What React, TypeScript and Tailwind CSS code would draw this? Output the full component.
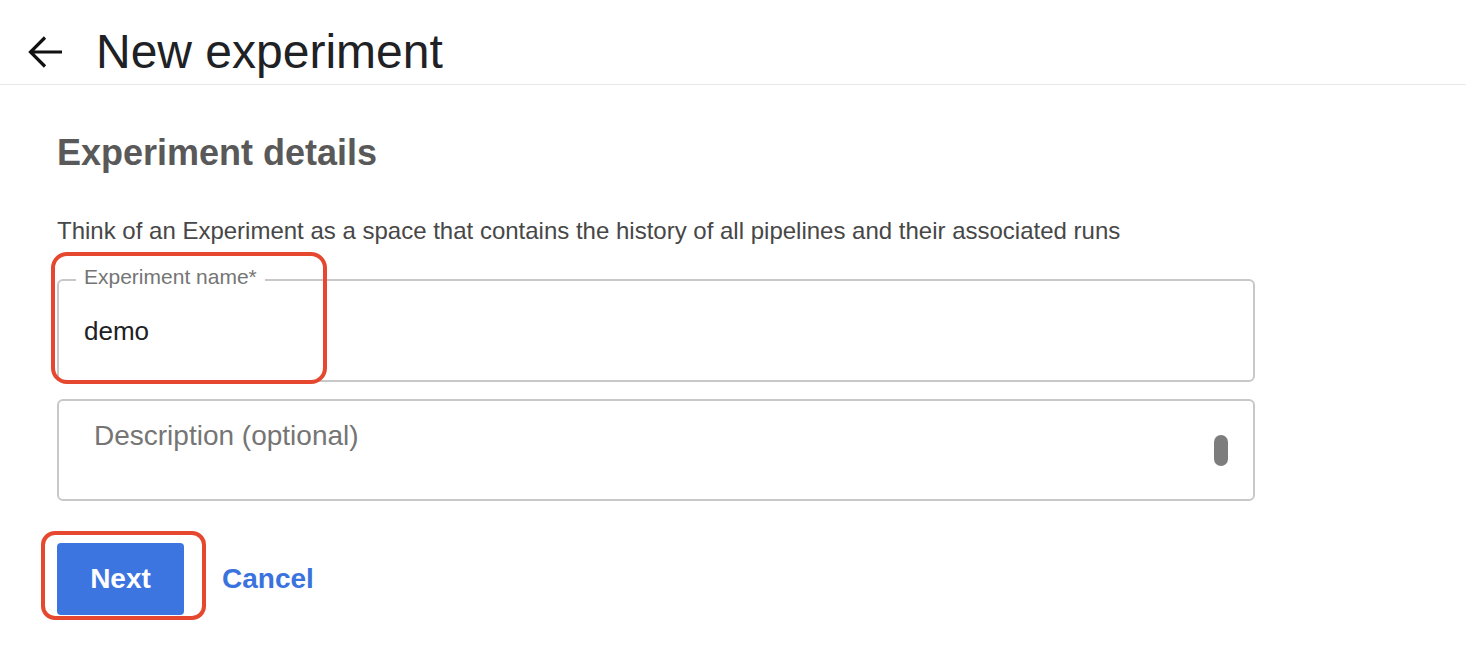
import React from "react";

function BackArrow() {
    return (
        <svg width="36" height="36" viewBox="0 0 36 36" fill="none">
            <path d="M34 18H3.5M17 3.5L2.5 18L17 32.5" stroke="#111111" strokeWidth="3.2" strokeLinecap="butt" strokeLinejoin="miter" />
        </svg>
    );
}

export default function App() {
    return (
        <div className="relative min-h-[648px] w-full bg-white text-[#202124]" style={{ fontFamily: "'Liberation Sans', Arial, sans-serif" }}>
            {/* Header */}
            <header className="flex h-[85px] items-center gap-[32px] border-b border-[#e8e8e8] pl-[28px] pt-[20px]">
                <BackArrow />
                <h1 className="text-[48px] leading-none text-[#202124]">New experiment</h1>
            </header>

            {/* Form */}
            <main className="px-[57px] pt-[50px]">
                <h2 className="text-[36px] font-bold leading-none text-[#595959]">Experiment details</h2>
                <p className="mt-[46px] text-[24px] leading-[28px] text-[#474747]">
                    Think of an Experiment as a space that contains the history of all pipelines and their associated runs
                </p>

                <div className="relative mt-[34px] h-[103px] w-[1198px] rounded-[6px] border-2 border-[#c8c8c8] pl-[25px] pt-[35px]">
                    <span className="absolute -top-[16px] left-[17px] bg-white px-[8px] text-[21px] leading-[24px] text-[#757575]">
                        Experiment name*
                    </span>
                    <span className="text-[26px] leading-[30px] text-[#202124]">demo</span>
                </div>

                <div className="mt-[17px] flex h-[102px] w-[1198px] items-center justify-between rounded-[6px] border-2 border-[#c8c8c8] pl-[35px] pr-[25px]">
                    <span className="self-start pt-[19px] text-[28px] leading-[32px] text-[#757575]">Description (optional)</span>
                    <span className="h-[31px] w-[14px] rounded-full bg-[#7d7d7d]"></span>
                </div>

                <div className="mt-[42px] flex items-center gap-[38px]">
                    <button className="h-[72px] w-[127px] rounded-[4px] bg-[#3c74e0] text-[28px] font-bold text-white">Next</button>
                    <button className="text-[28px] font-bold text-[#3b73de]">Cancel</button>
                </div>
            </main>

            {/* Annotation highlights */}
            <div className="pointer-events-none absolute left-[51px] top-[252px] h-[132px] w-[276px] rounded-[16px] border-[4px] border-[#e5482e]"></div>
            <div className="pointer-events-none absolute left-[41px] top-[531px] h-[89px] w-[165px] rounded-[14px] border-[4px] border-[#e5482e]"></div>
        </div>
    );
}
